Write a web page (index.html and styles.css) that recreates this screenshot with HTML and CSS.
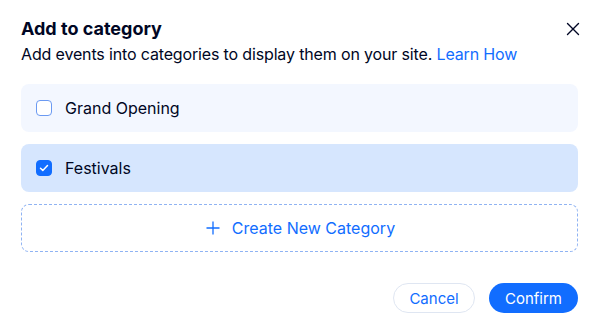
FILE: index.html
```html
<!DOCTYPE html>
<html lang="en">
<head>
    <meta charset="UTF-8">
    <meta name="viewport" content="width=device-width, initial-scale=1.0">
    <title>Add to category</title>
    <link rel="stylesheet" href="styles.css">
</head>
<body>
    <div class="modal">
        <div class="header">
            <h1>Add to category</h1>
            <button class="close" aria-label="Close">
                <svg width="14" height="14" viewBox="0 0 14 14"><path d="M1.5 1.5l11 11M12.5 1.5l-11 11" stroke="#000624" stroke-width="1.4" stroke-linecap="round"/></svg>
            </button>
        </div>
        <p class="subtitle">Add events into categories to display them on your site. <a href="#">Learn How</a></p>

        <div class="list">
            <label class="option">
                <span class="box"></span>
                Grand Opening
            </label>
            <label class="option checked">
                <span class="box">
                    <svg width="10" height="8" viewBox="0 0 10 8"><path d="M1.5 4.2l2.3 2.2 4.7-4.8" fill="none" stroke="#fff" stroke-width="1.5" stroke-linecap="round" stroke-linejoin="round"/></svg>
                </span>
                Festivals
            </label>
            <button class="create">
                <svg width="14" height="14" viewBox="0 0 14 14"><path d="M7 0.5v13M0.5 7h13" stroke="#116dff" stroke-width="1.3"/></svg>
                Create New Category
            </button>
        </div>

        <div class="footer">
            <button class="btn secondary">Cancel</button>
            <button class="btn primary">Confirm</button>
        </div>
    </div>
</body>
</html>
```

FILE: styles.css
```css
body {
    margin: 0;
    background: #fff;
    font-family: Inter, "Noto Sans", sans-serif;
    color: #000624;
}

.modal {
    padding: 16px 22px 0 21px;
}

.header {
    display: flex;
    justify-content: space-between;
    align-items: center;
}

h1 {
    margin: 0;
    font-size: 18px;
    line-height: 26px;
    font-weight: 700;
}

.close {
    border: none;
    background: none;
    padding: 0;
    margin-right: -2px;
    display: flex;
    cursor: pointer;
}

.subtitle {
    margin: 0;
    font-size: 16px;
    line-height: 24px;
    letter-spacing: -0.15px;
}

.subtitle a {
    color: #116dff;
    text-decoration: none;
}

.list {
    display: flex;
    flex-direction: column;
    gap: 12px;
    margin-top: 18px;
}

.option {
    display: flex;
    align-items: center;
    gap: 13px;
    height: 48px;
    padding: 0 15px;
    border-radius: 8px;
    background: #f3f7ff;
    font-size: 16px;
}

.option.checked {
    background: #d6e6fe;
}

.box {
    width: 16px;
    height: 16px;
    box-sizing: border-box;
    border: 1.5px solid #6b9af2;
    border-radius: 4px;
    background: #fff;
    display: flex;
    align-items: center;
    justify-content: center;
}

.checked .box {
    background: #116dff;
    border-color: #116dff;
}

.create {
    height: 48px;
    border: 1px dashed #8fb3f3;
    border-radius: 8px;
    background: #fff;
    color: #116dff;
    font-family: inherit;
    font-size: 16px;
    display: flex;
    align-items: center;
    justify-content: center;
    gap: 12px;
    padding-left: 8px;
    cursor: pointer;
}

.footer {
    display: flex;
    justify-content: flex-end;
    gap: 14px;
    margin-top: 31px;
}

.btn {
    height: 30px;
    border-radius: 15px;
    font-family: inherit;
    font-size: 15px;
    cursor: pointer;
}

.secondary {
    width: 82px;
    border: 1px solid #dfe6f2;
    background: #fff;
    color: #116dff;
}

.primary {
    width: 89px;
    border: none;
    background: #116dff;
    color: #fff;
}
```
